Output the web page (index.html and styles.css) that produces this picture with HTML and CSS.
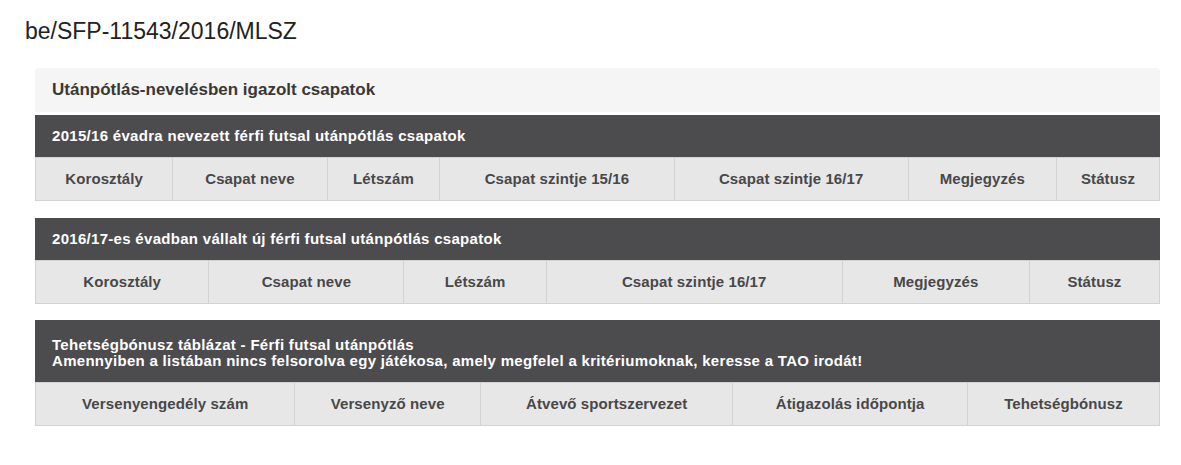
FILE: index.html
```html
<!DOCTYPE html>
<html lang="hu">
<head>
<meta charset="utf-8">
<title>be/SFP-11543/2016/MLSZ</title>
<link rel="stylesheet" href="styles.css">
</head>
<body>
<div class="page">
  <h1 class="title">be/SFP-11543/2016/MLSZ</h1>
  <div class="content">
    <div class="panel-heading">Utánpótlás-nevelésben igazolt csapatok</div>

    <section class="block">
      <div class="bar">2015/16 évadra nevezett férfi futsal utánpótlás csapatok</div>
      <table class="grid">
        <thead>
          <tr>
            <th>Korosztály</th>
            <th>Csapat neve</th>
            <th>Létszám</th>
            <th>Csapat szintje 15/16</th>
            <th>Csapat szintje 16/17</th>
            <th>Megjegyzés</th>
            <th>Státusz</th>
          </tr>
        </thead>
      </table>
    </section>

    <section class="block">
      <div class="bar">2016/17-es évadban vállalt új férfi futsal utánpótlás csapatok</div>
      <table class="grid">
        <thead>
          <tr>
            <th>Korosztály</th>
            <th>Csapat neve</th>
            <th>Létszám</th>
            <th>Csapat szintje 16/17</th>
            <th>Megjegyzés</th>
            <th>Státusz</th>
          </tr>
        </thead>
      </table>
    </section>

    <section class="block">
      <div class="bar bar-tall">Tehetségbónusz táblázat - Férfi futsal utánpótlás<br>Amennyiben a listában nincs felsorolva egy játékosa, amely megfelel a kritériumoknak, keresse a TAO irodát!</div>
      <table class="grid">
        <thead>
          <tr>
            <th>Versenyengedély szám</th>
            <th>Versenyző neve</th>
            <th>Átvevő sportszervezet</th>
            <th>Átigazolás időpontja</th>
            <th>Tehetségbónusz</th>
          </tr>
        </thead>
      </table>
    </section>
  </div>
</div>
</body>
</html>
```
FILE: styles.css
```css
html, body {
  margin: 0;
  padding: 0;
  background: #ffffff;
}

body {
  font-family: "Liberation Sans", Arial, Helvetica, sans-serif;
  color: #222222;
}

.page {
  padding: 18px 21px 0 25px;
}

.title {
  margin: 0 0 24px 0;
  font-size: 23px;
  font-weight: normal;
  line-height: 26px;
  color: #222222;
}

.content {
  margin-left: 10px;
}

.panel-heading {
  height: 44px;
  display: flex;
  align-items: center;
  padding: 0 17px;
  background: #f5f5f5;
  border-radius: 4px 4px 0 0;
  font-size: 17px;
  font-weight: bold;
  color: #3a3836;
  margin-bottom: 3px;
}

.block {
  margin-bottom: 17px;
}

.block:nth-of-type(2) {
  margin-bottom: 16px;
}

.bar {
  background: #4c4c4e;
  color: #ffffff;
  font-size: 15px;
  font-weight: bold;
  letter-spacing: 0.3px;
  line-height: 16px;
  padding: 13px 17px;
}

.bar-tall {
  padding: 17px 17px 13px;
}

.grid {
  width: 100%;
  border-collapse: collapse;
}

.grid th {
  background: #e7e7e8;
  border: 1px solid #d2d2d2;
  padding: 13px 8px;
  font-size: 15px;
  font-weight: bold;
  letter-spacing: 0.1px;
  line-height: 16px;
  color: #484848;
  text-align: center;
  white-space: nowrap;
}
```
